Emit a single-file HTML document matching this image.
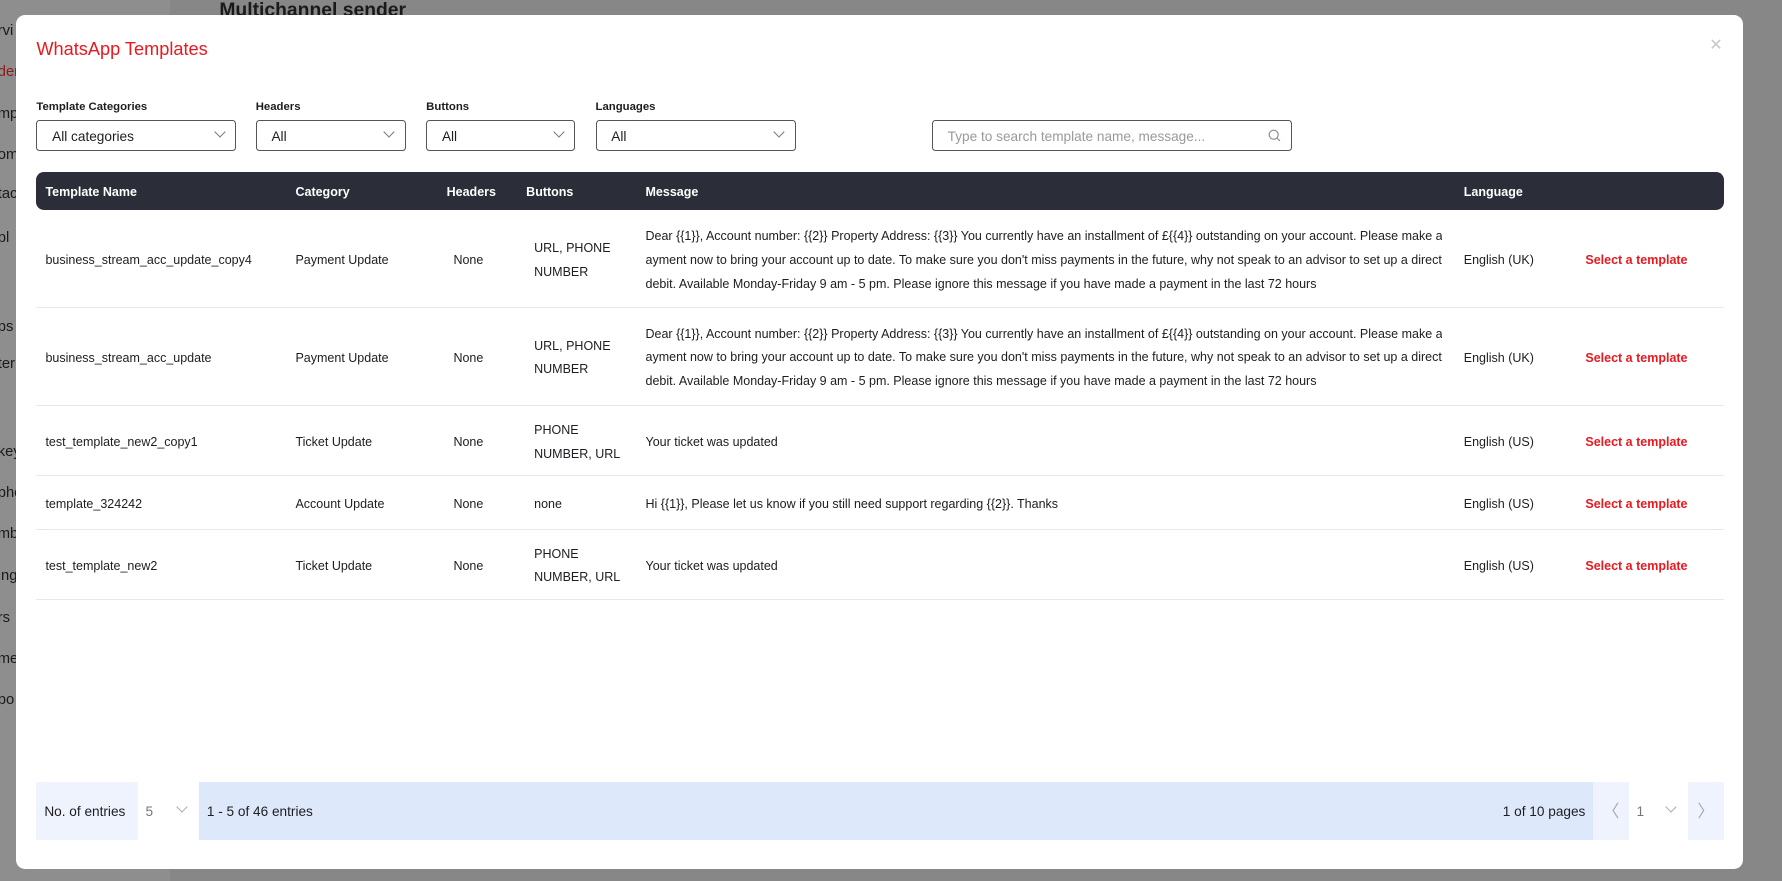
<!DOCTYPE html>
<html><head><meta charset="utf-8"><style>
*{box-sizing:border-box;margin:0;padding:0}
html,body{width:1782px;height:881px;overflow:hidden}
body{background:#878787;font-family:"Liberation Sans",sans-serif;color:#1d1d22}
#w{zoom:1.13648;position:relative;width:1568px;height:775px}
.side{position:absolute;left:0;top:0;width:150px;height:775px;background:#8e8e8e}
.st{position:absolute;left:-2px;font-size:13px;color:#1a1a1a}
.mt{position:absolute;left:193px;top:0;font-size:17px;font-weight:bold;color:#1a1a1a}
.modal{position:absolute;left:14px;top:13px;width:1520px;height:752px;background:#fff;border-radius:8px}
.ab{position:absolute}
.title{left:18px;top:21px;font-size:16px;color:#e8191f}
.close{left:1490px;top:18px;color:#c8c8c8;font-size:14px}
.lbl{font-size:10px;font-weight:bold;top:76px}
.sel{top:93px;height:27px;border:1px solid #555;border-radius:3px;font-size:12px;padding:7px 13px}
.chev{position:absolute;right:10px;top:6px;width:7px;height:7px;border-right:1px solid #777;border-bottom:1px solid #777;transform:rotate(45deg)}
.thead{left:18px;top:138px;width:1485px;height:34px;background:#2b2e38;border-radius:7px}
.th{position:absolute;top:12px;color:#fff;font-size:11px;font-weight:bold}
.row{position:absolute;left:18px;width:1485px;border-bottom:1px solid #e4e8ef}
.c{position:absolute;font-size:11px;line-height:21px;transform:translateY(-50%);top:calc(50% + 2px)}
.red{color:#e8191f;font-weight:bold}
.ft{position:absolute;top:675px;height:51px;font-size:12px;line-height:52px}
</style></head><body><div id="w">
<div class="side"></div>
<div class="st" style="top:20px">rvi</div>
<div class="st" style="top:56px;color:#8b1a1a">der</div>
<div class="st" style="top:93px">mpo</div>
<div class="st" style="top:129px">om</div>
<div class="st" style="top:164px">tac</div>
<div class="st" style="top:202px">pl</div>
<div class="st" style="top:281px">ps</div>
<div class="st" style="top:313px">ter</div>
<div class="st" style="top:391px">key</div>
<div class="st" style="top:427px">pho</div>
<div class="st" style="top:463px">mbe</div>
<div class="st" style="top:500px">ing</div>
<div class="st" style="top:537px">rs</div>
<div class="st" style="top:573px">me</div>
<div class="st" style="top:609px">po</div>
<div class="mt">Multichannel sender</div>
<div class="modal">
<div class="ab title">WhatsApp Templates</div>
<div class="ab close">✕</div>
<div class="ab lbl" style="left:18px">Template Categories</div>
<div class="ab lbl" style="left:211px">Headers</div>
<div class="ab lbl" style="left:361px">Buttons</div>
<div class="ab lbl" style="left:510px">Languages</div>
<div class="ab sel" style="left:18px;width:176px">All categories<span class="chev"></span></div>
<div class="ab sel" style="left:211px;width:132px">All<span class="chev"></span></div>
<div class="ab sel" style="left:361px;width:131px">All<span class="chev"></span></div>
<div class="ab sel" style="left:510px;width:176px">All<span class="chev"></span></div>
<div class="ab sel" style="left:806px;width:317px;color:#999">Type to search template name, message...<svg style="position:absolute;right:9px;top:7px" width="11" height="11" viewBox="0 0 11 11"><circle cx="5" cy="5" r="4" fill="none" stroke="#888"/><path d="M8 8L10.5 10.5" stroke="#888"/></svg></div>
<div class="ab thead">
<div class="th" style="left:8px">Template Name</div>
<div class="th" style="left:228px">Category</div>
<div class="th" style="left:361px">Headers</div>
<div class="th" style="left:431px">Buttons</div>
<div class="th" style="left:536px">Message</div>
<div class="th" style="left:1256px">Language</div>
</div>

<div class="row" style="top:173px;height:85px">
<div class="c" style="left:8px">business_stream_acc_update_copy4</div>
<div class="c" style="left:228px">Payment Update</div>
<div class="c" style="left:367px">None</div>
<div class="c" style="left:438px">URL, PHONE<br>NUMBER</div>
<div class="c" style="left:536px;width:701px;white-space:nowrap;overflow:hidden">Dear {{1}}, Account number: {{2}} Property Address: {{3}} You currently have an installment of £{{4}} outstanding on your account. Please make a p<br>ayment now to bring your account up to date. To make sure you don't miss payments in the future, why not speak to an advisor to set up a direct<br>debit. Available Monday-Friday 9 am - 5 pm. Please ignore this message if you have made a payment in the last 72 hours</div>
<div class="c" style="left:1256px">English (UK)</div>
<div class="c red" style="left:1363px">Select a template</div>
</div>
<div class="row" style="top:258px;height:86px">
<div class="c" style="left:8px">business_stream_acc_update</div>
<div class="c" style="left:228px">Payment Update</div>
<div class="c" style="left:367px">None</div>
<div class="c" style="left:438px">URL, PHONE<br>NUMBER</div>
<div class="c" style="left:536px;width:701px;white-space:nowrap;overflow:hidden">Dear {{1}}, Account number: {{2}} Property Address: {{3}} You currently have an installment of £{{4}} outstanding on your account. Please make a p<br>ayment now to bring your account up to date. To make sure you don't miss payments in the future, why not speak to an advisor to set up a direct<br>debit. Available Monday-Friday 9 am - 5 pm. Please ignore this message if you have made a payment in the last 72 hours</div>
<div class="c" style="left:1256px">English (UK)</div>
<div class="c red" style="left:1363px">Select a template</div>
</div>
<div class="row" style="top:344px;height:62px">
<div class="c" style="left:8px">test_template_new2_copy1</div>
<div class="c" style="left:228px">Ticket Update</div>
<div class="c" style="left:367px">None</div>
<div class="c" style="left:438px">PHONE<br>NUMBER, URL</div>
<div class="c" style="left:536px">Your ticket was updated</div>
<div class="c" style="left:1256px">English (US)</div>
<div class="c red" style="left:1363px">Select a template</div>
</div>
<div class="row" style="top:406px;height:47px">
<div class="c" style="left:8px">template_324242</div>
<div class="c" style="left:228px">Account Update</div>
<div class="c" style="left:367px">None</div>
<div class="c" style="left:438px">none</div>
<div class="c" style="left:536px">Hi {{1}}, Please let us know if you still need support regarding {{2}}. Thanks</div>
<div class="c" style="left:1256px">English (US)</div>
<div class="c red" style="left:1363px">Select a template</div>
</div>
<div class="row" style="top:453px;height:62px">
<div class="c" style="left:8px">test_template_new2</div>
<div class="c" style="left:228px">Ticket Update</div>
<div class="c" style="left:367px">None</div>
<div class="c" style="left:438px">PHONE<br>NUMBER, URL</div>
<div class="c" style="left:536px">Your ticket was updated</div>
<div class="c" style="left:1256px">English (US)</div>
<div class="c red" style="left:1363px">Select a template</div>
</div>

<div class="ft" style="left:18px;width:89px;background:#eef3fd;padding-left:7px">No. of entries</div>
<div class="ft" style="left:107px;width:54px;padding-left:7px;color:#777">5<span class="chev" style="top:19px;right:11px;border-color:#aaa"></span></div>
<div class="ft" style="left:161px;width:1227px;background:#dde9fb;padding:0 7px">1 - 5 of 46 entries<span style="float:right">1 of 10 pages</span></div>
<div class="ft" style="left:1388px;width:31px;background:#eef3fd;text-align:center;color:#aaa;font-size:15px">〈</div>
<div class="ft" style="left:1419px;width:52px;padding-left:7px;color:#777">1<span class="chev" style="top:19px;right:11px;border-color:#aaa"></span></div>
<div class="ft" style="left:1471px;width:32px;background:#eef3fd;text-align:center;color:#aaa;font-size:15px">〉</div>
</div>
</div></body></html>
